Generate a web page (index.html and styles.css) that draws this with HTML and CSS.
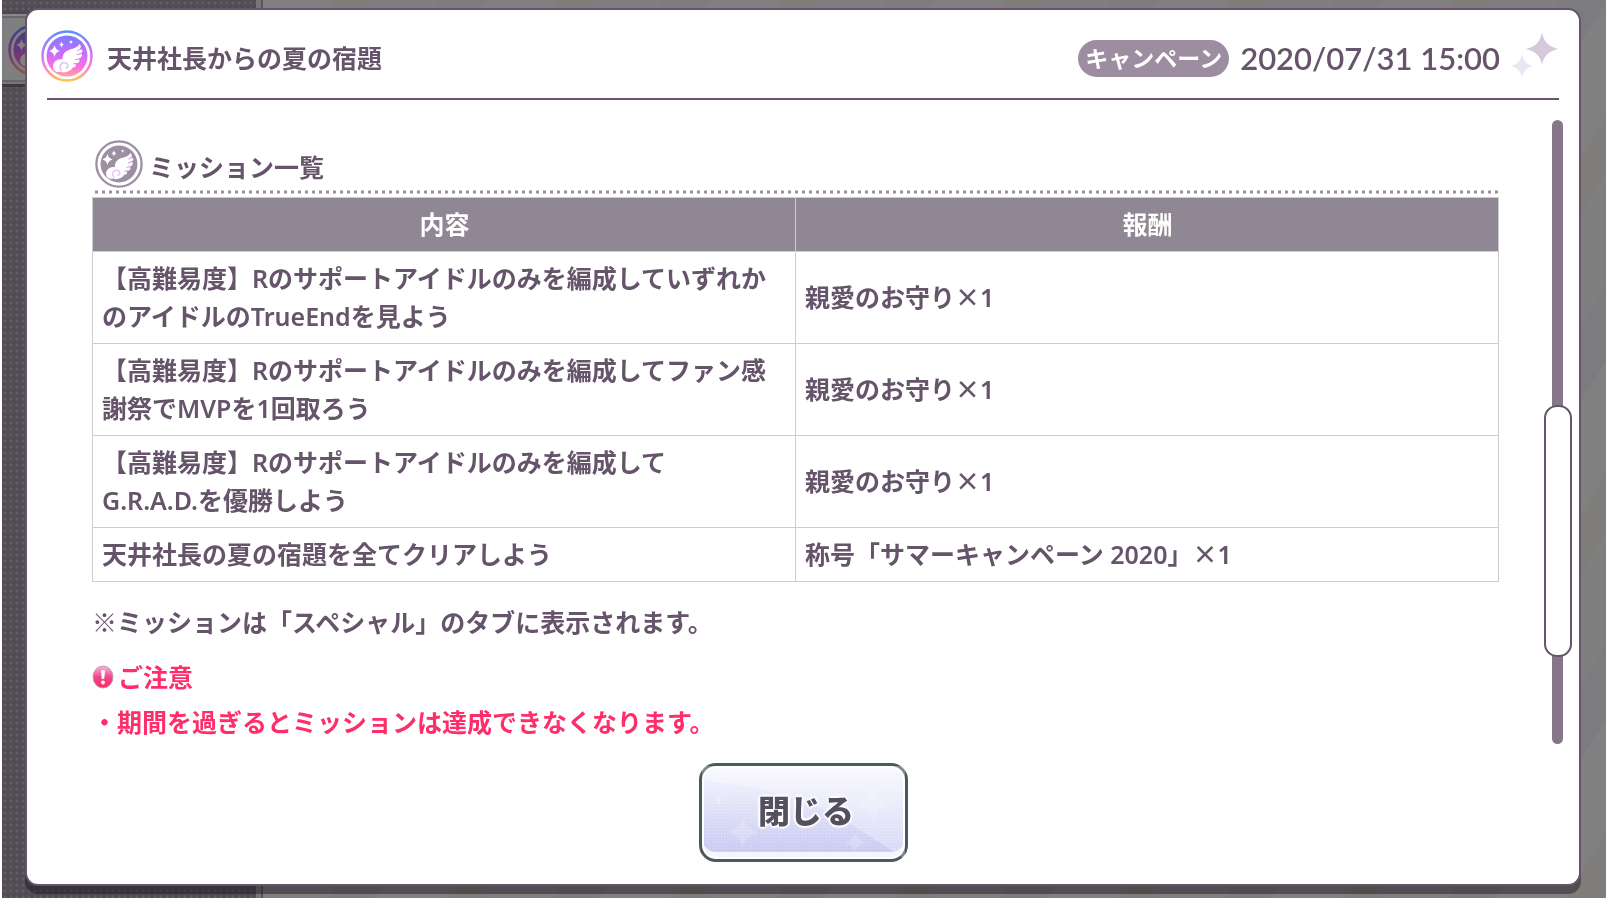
FILE: index.html
```
<!DOCTYPE html>
<html lang="ja">
<head>
<meta charset="utf-8">
<meta name="viewport" content="width=device-width, initial-scale=1">
<title>天井社長からの夏の宿題</title>
<link rel="stylesheet" href="styles.css">
</head>
<body>
<svg class="defs" aria-hidden="true">
  <defs>
    <linearGradient id="rainbow" x1="0" y1="0" x2="0" y2="1">
      <stop offset="0" stop-color="#5f8dff"/>
      <stop offset=".35" stop-color="#b277ff"/>
      <stop offset=".7" stop-color="#ff78dc"/>
      <stop offset="1" stop-color="#ffc24e"/>
    </linearGradient>
    <linearGradient id="disc" x1="0" y1="0" x2="0" y2="1">
      <stop offset="0" stop-color="#7a7dff"/>
      <stop offset=".45" stop-color="#cb6cfb"/>
      <stop offset=".8" stop-color="#ff72dc"/>
      <stop offset="1" stop-color="#ffa58e"/>
    </linearGradient>
    <linearGradient id="alert" x1="0" y1="0" x2="0" y2="1">
      <stop offset="0" stop-color="#ffb3d6"/>
      <stop offset=".5" stop-color="#f0468c"/>
      <stop offset="1" stop-color="#ff2a5c"/>
    </linearGradient>
    <symbol id="wing" viewBox="0 0 52 52">
      <path fill="#fff" d="M38.500 14C37 17 33 18.500 29 19.500C24 21 21.500 24 21.500 29.500C16.500 28.500 12 32 12 36.500C12 40.500 15.500 43 19.500 41.800C24 43.500 29.500 41.500 32 37.500C34.500 37.500 35.500 35.800 34.500 33.800L33 33.300C37.500 34 39.500 31.500 38 29L35.500 28.800C40 29 42 26 40.500 23.800L37.500 23.600C41.500 23.300 42.500 20.500 40.500 19.300L38.500 19.300C40.500 18 40 15 38.500 14Z"/>
      <path class="curl" fill="none" stroke-width="1.300" stroke-linecap="round" d="M20.500 40.500C18 37.500 19 33 22.800 32.600C27 32.300 28.500 37.200 25 38.200"/>
      <path class="feather" fill="none" stroke-width="1" stroke-linecap="round" d="M36.500 20.500L40 19.200M36 24.800L40 23.700M34.500 29.700L38 29M32.500 33.800L34.800 33.600"/>
      <path fill="#fff" d="M13.500 15Q14.500 20 19 21Q14.500 22 13.500 27Q12.500 22 8 21Q12.500 20 13.500 15ZM20.500 11.500Q21 14 23 14.500Q21 15 20.500 17.500Q20 15 18 14.500Q20 14 20.500 11.500ZM30 10Q30.300 11.700 32 12Q30.300 12.300 30 14Q29.700 12.300 28 12Q29.700 11.700 30 10Z"/>
    </symbol>
  </defs>
</svg>

<div class="backdrop" aria-hidden="true">
  <div class="side">
    <div class="side-tab">
      <svg class="side-icon" viewBox="0 0 52 52"><circle cx="26" cy="26" r="24.500" fill="none" stroke="url(#rainbow)" stroke-width="2.500"/><circle cx="26" cy="26" r="20.500" fill="url(#disc)"/><use href="#wing"/></svg>
    </div>
  </div>
  <div class="scene"></div>
</div>

<main class="dialog" role="dialog" aria-labelledby="title">
  <header class="head">
    <svg class="head-icon" viewBox="0 0 52 52" aria-hidden="true"><circle cx="26" cy="26" r="24.500" fill="none" stroke="url(#rainbow)" stroke-width="2.500"/><circle cx="26" cy="26" r="20.500" fill="url(#disc)"/><use href="#wing"/></svg>
    <h1 class="title" id="title">天井社長からの夏の宿題</h1>
    <span class="badge">キャンペーン</span>
    <time class="date" datetime="2020-07-31T15:00">2020/07/31 15:00</time>
    <svg class="sparkles" viewBox="0 0 48 48" aria-hidden="true"><path fill="#d6c9dc" d="M31 0Q33 14 47 17Q33 20 31 33Q29 20 15 17Q29 14 31 0Z"/><path fill="#ebe6f0" d="M11 22Q12.500 32 22 34Q12.500 36 11 46Q9.500 36 0 34Q9.500 32 11 22Z"/></svg>
  </header>

  <div class="body">
    <div class="content">
      <h2 class="section">
        <svg class="section-icon" viewBox="0 0 52 52" aria-hidden="true"><circle cx="26" cy="26" r="24.500" fill="none" stroke="#9d8fa2" stroke-width="2.500"/><circle cx="26" cy="26" r="20" fill="#9d8fa2"/><use href="#wing"/></svg>
        <span>ミッション一覧</span>
      </h2>
      <svg class="dots" aria-hidden="true"><line x1="2" y1="2" x2="100%" y2="2"/></svg>
      <table class="missions">
        <thead><tr><th scope="col">内容</th><th scope="col">報酬</th></tr></thead>
        <tbody>
          <tr><td>【高難易度】Rのサポートアイドルのみを編成していずれかのアイドルのTrueEndを見よう</td><td>親愛のお守り<span class="times">×</span>1</td></tr>
          <tr><td>【高難易度】Rのサポートアイドルのみを編成してファン感謝祭でMVPを1回取ろう</td><td>親愛のお守り<span class="times">×</span>1</td></tr>
          <tr><td>【高難易度】Rのサポートアイドルのみを編成して<br>G.R.A.D.を優勝しよう</td><td>親愛のお守り<span class="times">×</span>1</td></tr>
          <tr><td>天井社長の夏の宿題を全てクリアしよう</td><td>称号「サマーキャンペーン 2020」<span class="times">×</span>1</td></tr>
        </tbody>
      </table>
      <p class="note">※ミッションは「スペシャル」のタブに表示されます。</p>
      <h3 class="caution">
        <svg class="alert" viewBox="0 0 22 24" aria-hidden="true"><ellipse cx="11" cy="12" rx="10" ry="11" fill="url(#alert)" stroke="#b9a0b0"/><path fill="#fff" d="M9 5.500Q11 4.500 13 5.500L12.200 14H9.800Z"/><circle cx="11" cy="17.500" r="1.900" fill="#fff"/></svg>
        <span>ご注意</span>
      </h3>
      <ul class="cautions"><li>・期間を過ぎるとミッションは達成できなくなります。</li></ul>
    </div>
    <div class="track"><div class="thumb"></div></div>
  </div>

  <footer class="foot">
    <button class="close" type="button">
      <svg class="close-art" viewBox="0 0 200 90" preserveAspectRatio="none" aria-hidden="true"><path fill="#fff" opacity=".3" d="M0 0H200V90L130 46Q70 20 0 14Z"/><path fill="#fff" opacity=".2" d="M40 48Q43 62 56 64Q43 66 40 80Q37 66 24 64Q37 62 40 48ZM151 64Q153 72 161 74Q153 76 151 84Q149 76 141 74Q149 72 151 64ZM168 18Q171 34 187 37Q171 40 168 56Q165 40 149 37Q165 34 168 18ZM17 28Q18 32 22 33Q18 34 17 38Q16 34 12 33Q16 32 17 28Z"/></svg>
      <span class="close-label">閉じる</span>
    </button>
  </footer>
</main>
</body>
</html>
```
FILE: styles.css
```
* { box-sizing: border-box; }

body {
  margin: 0;
  min-height: 100vh;
  display: flex;
  background: #fff;
  color: #65546a;
  font: 700 25px/38px Lato, "Noto Sans CJK JP", sans-serif;
}

h1, h2, h3, p, ul { margin: 0; padding: 0; font: inherit; }
ul { list-style: none; }

.defs { position: absolute; width: 0; height: 0; }

/* dimmed page behind the dialog */
.backdrop {
  position: fixed;
  inset: 0 0 0 2px;
  display: flex;
  overflow: hidden;
}
.side {
  width: 261px;
  flex: none;
  padding-top: 12px;
  border-right: 2px solid #5b525d;
  box-shadow: inset -5px 0 #777578;
  background: radial-gradient(circle, #625b63 1px, transparent 2px) 0 0 / 6px 6px #514b53;
}
.side-tab {
  height: 72px;
  width: 250px;
  padding: 10px 6px;
  background: #7f7e80;
  border-top: 2px solid #4d474f;
  box-shadow: inset 0 2px #8a888b, inset 0 4px #6a666c, inset 0 -2px #777578, inset 0 -4px #68646a, 0 3px #3d373f;
}
.side-icon { display: block; width: 52px; height: 52px; filter: brightness(.5); }
.scene {
  flex: 1;
  background: repeating-linear-gradient(122deg, #808080 0 60px, #7e7d7a 62px 90px, #7f7f80 92px 150px, #7c7b7f 152px 190px);
}

.dialog {
  position: relative;
  flex: 1;
  display: flex;
  flex-direction: column;
  margin: 8px 25px 13px 25px;
  padding: 0 20px 22px;
  background: #fff;
  border: 2px solid #65546a;
  border-radius: 13px;
  box-shadow: 0 8px rgba(24, 20, 26, .45);
}

.head {
  display: flex;
  align-items: center;
  height: 90px;
  padding-top: 8px;
  border-bottom: 2px solid #65546a;
}
.head-icon { width: 52px; height: 52px; margin: 0 14px 4px -6px; flex: none; }
.title { flex: 1; }
.badge {
  padding: 0 7px;
  border-radius: 19px;
  background: #9d8da0;
  color: #fff;
  font-size: 23px;
  line-height: 37px;
}
.date { margin-left: 11px; font-size: 31px; font-weight: 600; }
.sparkles { width: 48px; height: 48px; margin: 0 0 4px 11px; flex: none; }
.curl { stroke: #e3b4f6; }
.feather { stroke: #d98cf8; }
.section .curl { stroke: #c3b9c7; }

.body { flex: 1; display: flex; padding: 20px 0 0 45px; gap: 53px; }
.content { flex: 1; padding-top: 20px; }
.section { display: flex; align-items: center; gap: 6px; height: 48px; padding-left: 3px; }
.section span { padding-top: 6px; }
.section-icon { width: 48px; height: 48px; }
.dots { display: block; width: 100%; height: 4px; margin: 2px 0 3px; padding-left: 1px; }
.dots line { stroke: #9d8fa2; stroke-width: 3; stroke-dasharray: 3 4; }

.missions { width: 100%; border-collapse: collapse; table-layout: fixed; font-family: "Noto Sans", "Noto Sans CJK JP", sans-serif; }
.missions th, .missions td { padding: 7px 8px 8px 9px; border: 1px solid #cfcbd3; text-align: left; }
.missions td { font-weight: 600; }
.missions th { background: #908794; color: #fff; text-align: center; }
.times { font-family: "Noto Sans CJK JP", sans-serif; line-height: 1; }

.note { margin-top: 21px; }
.caution { display: flex; align-items: center; gap: 4px; margin-top: 17px; color: #ff2d69; }
.alert { width: 22px; height: 24px; }
.cautions { margin-top: 7px; color: #ff2d69; }

.track { width: 11px; height: 624px; margin-right: -4px; flex: none; padding-top: 285px; background: #857788; border-radius: 6px; }
.thumb { width: 28px; height: 252px; margin-left: -8px; background: #fff; border: 2px solid #65546a; border-radius: 13px; }

.foot { display: flex; justify-content: center; margin-top: 19px; }
.close {
  position: relative;
  width: 209px;
  height: 99px;
  padding: 0 0 8px 6px;
  border: 3px solid #4c5a60;
  border-radius: 17px;
  background: radial-gradient(circle, rgba(255, 255, 255, .3) 1px, transparent 1px) 0 0 / 3px 3px, linear-gradient(#f7f7fe, #c5c7f2);
  box-shadow: inset 0 0 0 2px #fff, inset 0 -7px #f4f5fe;
  color: #54505f;
  font: 900 32px/48px "Noto Sans CJK JP", sans-serif;
}
.close-art { position: absolute; inset: 0; width: 100%; height: 100%; }
.close-label { position: relative; text-shadow: 0 0 3px #fff, 0 0 3px #fff, 2px 0 2px #fff, -2px 0 2px #fff, 0 2px 2px #fff, 0 -2px 2px #fff; }
```
